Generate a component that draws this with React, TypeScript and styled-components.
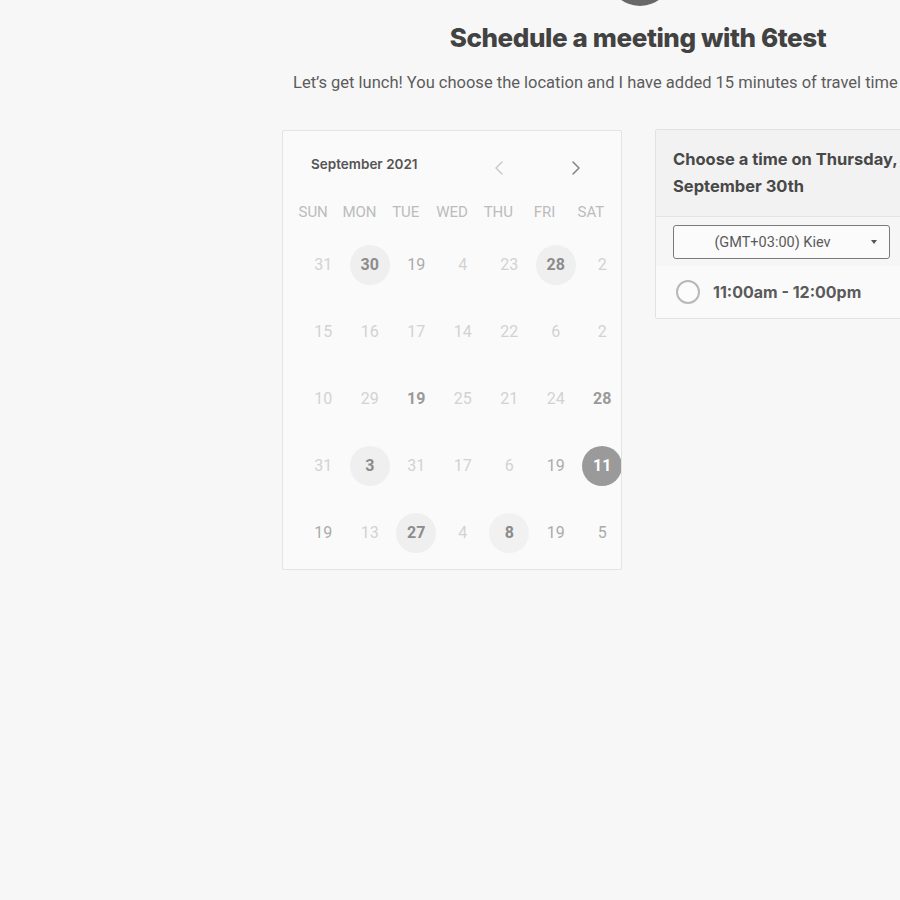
import React from 'react'
import styled, { createGlobalStyle } from 'styled-components'

const GlobalStyle = createGlobalStyle`
  html, body {
    margin: 0;
    padding: 0;
    background: #f7f7f7;
    overflow: hidden;
  }
`

const Page = styled.div`
  width: 1280px;
  min-height: 900px;
  background: #f7f7f7;
  display: flex;
  flex-direction: column;
  align-items: center;
  font-family: Roboto, 'Liberation Sans', sans-serif;
`

const Avatar = styled.div`
  width: 64px;
  height: 64px;
  border-radius: 50%;
  background: #686868;
  margin-top: -58px;
`

const Title = styled.h1`
  margin: 16px 4px 0 0;
  font-family: Inter, 'Liberation Sans', sans-serif;
  font-weight: 800;
  font-size: 26px;
  line-height: 32px;
  letter-spacing: -0.4px;
  color: #424242;
`

// the line is wider than the frame and runs past its right edge
const Subtitle = styled.p`
  margin: 17px 0 0;
  width: 694px;
  white-space: nowrap;
  font-size: 16.5px;
  line-height: 24px;
  color: #5c5c5c;
`

const Panels = styled.div`
  display: flex;
  align-items: flex-start;
  gap: 33px;
  margin-top: 35px;
`

const CalendarCard = styled.div`
  width: 340px;
  box-sizing: border-box;
  background: #fafafa;
  border: 1px solid #e4e4e4;
  border-radius: 2px;
  overflow: hidden;
  padding: 19px 0 3px;
`

const MonthBar = styled.div`
  display: flex;
  align-items: center;
  height: 28px;
  padding-left: 28px;
`

const MonthLabel = styled.div`
  flex-shrink: 0;
  font-family: Inter, 'Liberation Sans', sans-serif;
  font-weight: 600;
  font-size: 13.5px;
  color: #555;
  width: 183px;
`

const NavButton = styled.div<{ $active?: boolean }>`
  flex-shrink: 0;
  width: 77px;
  display: flex;
  align-items: center;
  margin-top: 8px;
  color: ${(p) => (p.$active ? '#888' : '#ccc')};
`

const WeekRow = styled.div`
  display: grid;
  grid-template-columns: repeat(7, 46.3px);
  padding-left: 7px;
  margin-top: 22px;
  height: 24px;
  align-items: center;
`

const WeekDay = styled.div`
  text-align: center;
  font-size: 15px;
  color: #bcbcbc;
`

const DayGrid = styled.div`
  display: grid;
  grid-template-columns: repeat(7, 46.5px);
  grid-auto-rows: 67px;
  padding-left: 17px;
  margin-top: 7px;
`

type Tone = 'faint' | 'mid' | 'strong' | 'open' | 'soft' | 'picked'

const DayCell = styled.div`
  display: flex;
  align-items: center;
  justify-content: center;
`

const toneColor: Record<Tone, string> = {
  faint: '#d2d2d2',
  mid: '#ababab',
  strong: '#9a9a9a',
  open: '#8c8c8c',
  soft: '#8a8a8a',
  picked: '#fff',
}

const toneBg: Record<Tone, string> = {
  faint: 'transparent',
  mid: 'transparent',
  strong: 'transparent',
  open: '#efefef',
  soft: '#f1f1f1',
  picked: '#9a9a9a',
}

const DayNum = styled.div<{ $tone: Tone }>`
  width: 40px;
  height: 40px;
  border-radius: 50%;
  display: flex;
  align-items: center;
  justify-content: center;
  font-size: 16px;
  font-weight: ${(p) => (p.$tone === 'faint' || p.$tone === 'mid' ? 400 : 700)};
  color: ${(p) => toneColor[p.$tone]};
  background: ${(p) => toneBg[p.$tone]};
`

const TimePanel = styled.div`
  width: 343px;
  box-sizing: border-box;
  border: 1px solid #e2e2e2;
  border-radius: 2px;
  background: #fafafa;
  margin-top: -1px;
`

const TimeHeader = styled.div`
  background: #f2f2f2;
  border-bottom: 1px solid #e4e4e4;
  padding: 16px 17px;
  font-family: Inter, 'Liberation Sans', sans-serif;
  font-weight: 700;
  font-size: 16.5px;
  line-height: 27px;
  color: #484848;
`

const ZoneRow = styled.div`
  background: #f6f6f6;
  padding: 8px 17px 7px;
`

const ZoneSelect = styled.div`
  width: 217px;
  height: 34px;
  box-sizing: border-box;
  border: 1px solid #7a7a7a;
  border-radius: 3px;
  background: #fbfbfb;
  display: flex;
  align-items: center;
  position: relative;
  font-size: 14.5px;
  color: #5a5a5a;
`

const ZoneText = styled.span`
  flex: 1;
  text-align: center;
  padding-right: 18px;
`

const Caret = styled.span`
  position: absolute;
  right: 12px;
  top: 14px;
  width: 0;
  height: 0;
  border-left: 3.5px solid transparent;
  border-right: 3.5px solid transparent;
  border-top: 4px solid #555;
`

const SlotRow = styled.div`
  display: flex;
  align-items: center;
  gap: 13px;
  padding: 14px 20px 14px;
`

const Radio = styled.span`
  width: 24px;
  height: 24px;
  border-radius: 50%;
  border: 2px solid #b8b8b8;
  box-sizing: border-box;
  background: #fcfcfc;
`

const SlotLabel = styled.span`
  font-family: Inter, 'Liberation Sans', sans-serif;
  font-weight: 700;
  font-size: 16px;
  color: #5a5a5a;
`

const Chevron = ({ dir }: { dir: 'left' | 'right' }): JSX.Element => (
  <svg width="10" height="16" viewBox="0 0 10 16" fill="none">
    <polyline
      points={dir === 'left' ? '8,2 2,8 8,14' : '2,2 8,8 2,14'}
      stroke="currentColor"
      strokeWidth="1.6"
      strokeLinecap="round"
      strokeLinejoin="round"
    />
  </svg>
)

const weekDays = ['SUN', 'MON', 'TUE', 'WED', 'THU', 'FRI', 'SAT']

const days: [string, Tone][][] = [
  [['31', 'faint'], ['30', 'open'], ['19', 'mid'], ['4', 'faint'], ['23', 'faint'], ['28', 'open'], ['2', 'faint']],
  [['15', 'faint'], ['16', 'faint'], ['17', 'faint'], ['14', 'faint'], ['22', 'faint'], ['6', 'faint'], ['2', 'faint']],
  [['10', 'faint'], ['29', 'faint'], ['19', 'strong'], ['25', 'faint'], ['21', 'faint'], ['24', 'faint'], ['28', 'strong']],
  [['31', 'faint'], ['3', 'open'], ['31', 'faint'], ['17', 'faint'], ['6', 'faint'], ['19', 'mid'], ['11', 'picked']],
  [['19', 'mid'], ['13', 'faint'], ['27', 'open'], ['4', 'faint'], ['8', 'soft'], ['19', 'mid'], ['5', 'mid']],
]

const App = (): JSX.Element => {
  return (
    <Page>
      <GlobalStyle />
      <Avatar />
      <Title>Schedule a meeting with 6test</Title>
      <Subtitle>
        Let’s get lunch! You choose the location and I have added 15 minutes of travel time
      </Subtitle>

      <Panels>
        <CalendarCard>
          <MonthBar>
            <MonthLabel>September 2021</MonthLabel>
            <NavButton>
              <Chevron dir="left" />
            </NavButton>
            <NavButton $active>
              <Chevron dir="right" />
            </NavButton>
          </MonthBar>

          <WeekRow>
            {weekDays.map((d) => (
              <WeekDay key={d}>{d}</WeekDay>
            ))}
          </WeekRow>

          <DayGrid>
            {days.map((row, r) =>
              row.map(([n, tone], c) => (
                <DayCell key={`${r}-${c}`}>
                  <DayNum $tone={tone}>{n}</DayNum>
                </DayCell>
              ))
            )}
          </DayGrid>
        </CalendarCard>

        <TimePanel>
          <TimeHeader>
            Choose a time on Thursday,
            <br />
            September 30th
          </TimeHeader>
          <ZoneRow>
            <ZoneSelect>
              <ZoneText>(GMT+03:00) Kiev</ZoneText>
              <Caret />
            </ZoneSelect>
          </ZoneRow>
          <SlotRow>
            <Radio />
            <SlotLabel>11:00am - 12:00pm</SlotLabel>
          </SlotRow>
        </TimePanel>
      </Panels>
    </Page>
  )
}

export default App
